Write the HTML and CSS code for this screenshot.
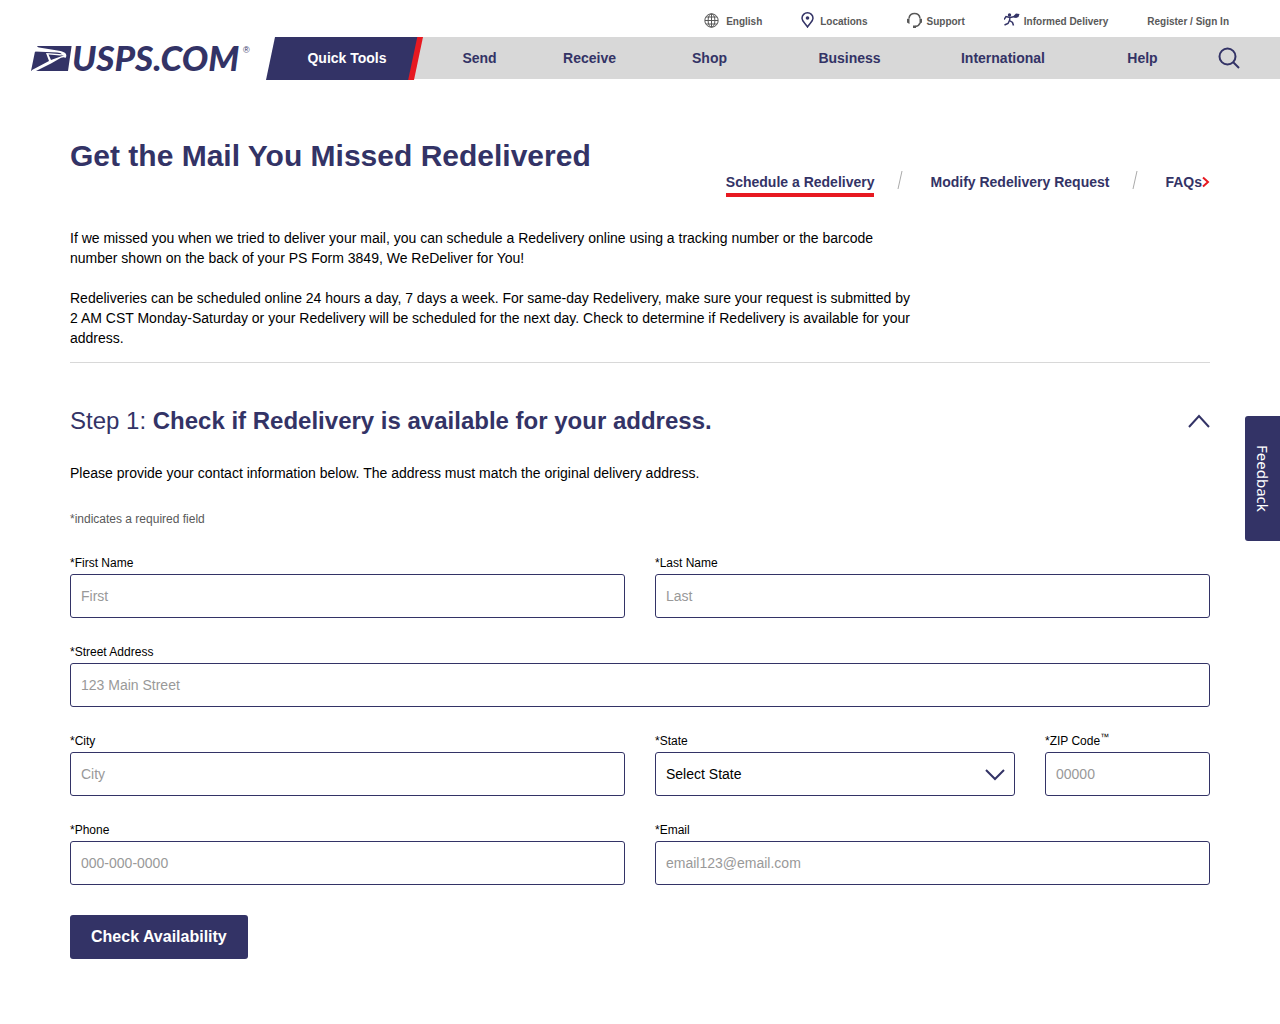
FILE: index.html
```html
<!DOCTYPE html>
<html lang="en">
<head>
<meta charset="utf-8">
<meta name="viewport" content="width=device-width, initial-scale=1">
<title>Schedule a Redelivery | USPS</title>
<link rel="stylesheet" href="styles.css">
</head>
<body>
<header class="site-header">
  <a class="logo" href="#" aria-label="USPS.COM home">
    <svg width="222" height="34" viewBox="0 0 222 34" aria-hidden="true">
      <path class="logo-mark" d="M6 5H40.600L37 30H0L4 10.500L9 9z"/>
      <path class="logo-wing" d="M5 6L28 9.800Q33 10.500 35 13Q36 15 34.500 17Q33 15.500 30 16.800L20 22.500L4 30.500H0L1 29L18 20L15 12L31 13.200Q30 11.800 26 11.500L4 10.500z"/>
      <path class="logo-mark" d="M17.500 13.500L29 14.500L33 14.200L29 15.800L20 19z"/>
      <text class="logo-text" x="41" y="30">USPS.COM</text>
      <text class="logo-reg" x="212" y="12">®</text>
    </svg>
  </a>
  <div class="header-bars">
    <nav class="utility" aria-label="Utility">
      <a href="#"><svg class="icon-globe" width="16" height="15" viewBox="0 0 16 15" aria-hidden="true"><circle cx="7.500" cy="7.500" r="6.700"/><ellipse cx="7.500" cy="7.500" rx="3.400" ry="6.700"/><path d="M7.500 1v13M1 7.500h13M2 4h11M2 11h11"/></svg>English</a>
      <a href="#"><svg class="icon-pin" width="13" height="16" viewBox="0 0 13 16" aria-hidden="true"><path d="M6.500 15C4.500 11.500 1 9.500 1 6.200A5.500 5.400 0 0 1 12 6.200C12 9.500 8.500 11.500 6.500 15z"/><circle cx="6.500" cy="6" r="1.800"/></svg>Locations</a>
      <a class="tight" href="#"><svg class="icon-headset" width="16" height="16" viewBox="0 0 16 16" aria-hidden="true"><path d="M2 6A5.600 5.500 0 0 1 13 6M13 11Q12 14 8.500 14.500"/><path class="solid" d="M0 7l2.500-1v6L0 10.500zM15 7l-2.500-1v6L15 10.500zM6 13.500h3V16H6z"/></svg>Support</a>
      <a class="tight" href="#"><svg class="icon-runner" width="16" height="16" viewBox="0 0 16 16" aria-hidden="true"><circle cx="5.500" cy="3" r="1.700"/><path class="limb" d="M0 7.500L2 4.500L6 5.500L11 4.500M6 5L5.500 9M5.500 8.500L8.500 10.500L9.500 13.500M5.500 8.500L4 11.500L0.500 13"/><path d="M9.500 4L12 1.500L15.500 2L14.500 5L12 6L10 5.500z"/></svg>Informed Delivery</a>
      <a href="#">Register / Sign In</a>
    </nav>
    <nav class="main-nav" aria-label="Main">
      <a class="quick-tools" href="#">Quick Tools</a>
      <a href="#">Send</a>
      <a href="#">Receive</a>
      <a href="#">Shop</a>
      <a href="#">Business</a>
      <a href="#">International</a>
      <a href="#">Help</a>
      <button class="search" type="button" aria-label="Search"><svg width="22" height="22" viewBox="0 0 22 22" aria-hidden="true"><circle cx="9.500" cy="9.500" r="8"/><path d="M15 15l6 6"/></svg></button>
    </nav>
  </div>
</header>

<main class="container">
  <div class="page-head">
    <h1>Get the Mail You Missed Redelivered</h1>
    <nav class="tabs" aria-label="Redelivery">
      <a class="active" href="#">Schedule a Redelivery</a>
      <svg width="10" height="18" viewBox="0 0 10 18" aria-hidden="true"><path d="M5 0L1 18"/></svg>
      <a href="#">Modify Redelivery Request</a>
      <svg width="10" height="18" viewBox="0 0 10 18" aria-hidden="true"><path d="M5 0L1 18"/></svg>
      <a class="faqs" href="#">FAQs<svg width="8" height="12" viewBox="0 0 8 12" aria-hidden="true"><path d="M1 1.500l5 4.500l-5 4.500"/></svg></a>
    </nav>
  </div>
  <div class="intro">
    <p>If we missed you when we tried to deliver your mail, you can schedule a Redelivery online using a tracking number or the barcode number shown on the back of your PS Form 3849, We ReDeliver for You!</p>
    <p>Redeliveries can be scheduled online 24 hours a day, 7 days a week. For same-day Redelivery, make sure your request is submitted by 2 AM CST Monday-Saturday or your Redelivery will be scheduled for the next day. Check to determine if Redelivery is available for your address.</p>
  </div>

  <section class="step">
    <div class="step-head">
      <h2>Step 1: <strong>Check if Redelivery is available for your address.</strong></h2>
      <button type="button" aria-label="Collapse step 1"><svg width="22" height="14" viewBox="0 0 22 14" aria-hidden="true"><path d="M1 13L11 2l10 11"/></svg></button>
    </div>
    <p>Please provide your contact information below. The address must match the original delivery address.</p>
    <p class="required-note">*indicates a required field</p>
    <form class="address-form">
      <div class="field"><label for="first">*First Name</label><input id="first" type="text" placeholder="First"></div>
      <div class="field"><label for="last">*Last Name</label><input id="last" type="text" placeholder="Last"></div>
      <div class="field full"><label for="street">*Street Address</label><input id="street" type="text" placeholder="123 Main Street"></div>
      <div class="field"><label for="city">*City</label><input id="city" type="text" placeholder="City"></div>
      <div class="state-zip">
        <div class="field"><label for="state">*State</label>
          <div class="select-wrap"><select id="state"><option>Select State</option></select><svg width="20" height="12" viewBox="0 0 20 12" aria-hidden="true"><path d="M1 1l9 9l9-9"/></svg></div>
        </div>
        <div class="field"><label for="zip">*ZIP Code<sup>™</sup></label><input id="zip" type="text" placeholder="00000"></div>
      </div>
      <div class="field"><label for="phone">*Phone</label><input id="phone" type="tel" placeholder="000-000-0000"></div>
      <div class="field"><label for="email">*Email</label><input id="email" type="email" placeholder="email123@email.com"></div>
      <button class="submit" type="button">Check Availability</button>
    </form>
  </section>
</main>
<button class="feedback" type="button">Feedback</button>
</body>
</html>
```
FILE: styles.css
```css
* {
  box-sizing: border-box;
}

body {
  margin: 0;
  background: #fff;
  color: #000;
  font: 14px/20px "Liberation Sans", Arial, sans-serif;
}

a {
  color: #333366;
  text-decoration: none;
}

h1, h2, p {
  margin: 0;
}

button {
  padding: 0;
  border: 0;
  background: none;
  font-family: inherit;
  cursor: pointer;
}

svg {
  display: block;
  flex: none;
  fill: none;
  stroke: #333366;
}

/* Header */
.site-header {
  display: flex;
}

.logo {
  flex: 0 0 266px;
  padding: 41px 0 0 31px;
}

.logo svg {
  overflow: visible;
  stroke: none;
}

.logo-mark, .logo-text, .logo-reg {
  fill: #333366;
}

.logo-wing {
  fill: #fff;
}

.logo-text {
  font: italic 900 35px Lato, sans-serif;
}

.logo-reg {
  font: 9px "Liberation Sans", Arial, sans-serif;
}

.header-bars {
  flex: 1;
}

.utility {
  display: flex;
  justify-content: flex-end;
  align-items: center;
  gap: 39px;
  height: 37px;
  padding: 6px 51px 0 0;
}

.utility a {
  display: flex;
  align-items: center;
  gap: 6px;
  color: #595959;
  font-size: 10px;
  font-weight: bold;
}

.utility .tight {
  gap: 4px;
}

.utility svg {
  margin-bottom: 3px;
}

.icon-globe, .icon-headset {
  stroke: #595959;
}

.icon-headset {
  stroke-width: 1.5;
}

.icon-headset .solid {
  fill: #595959;
  stroke: none;
}

.icon-pin {
  stroke-width: 1.5;
}

.icon-pin circle, .icon-runner {
  fill: #333366;
  stroke: none;
}

.icon-runner .limb {
  fill: none;
  stroke: #333366;
  stroke-width: 1.5;
}

.main-nav {
  display: grid;
  grid-template-columns: 158fr 111fr 109fr 131fr 149fr 158fr 121fr 52fr;
  height: 42px;
  padding-right: 25px;
  background: linear-gradient(90deg, #fff 12px, #d8d8d8 12px);
}

.main-nav > a, .search {
  display: flex;
  align-items: center;
  justify-content: center;
  padding-bottom: 1px;
  font-weight: bold;
}

.main-nav .quick-tools {
  height: 43px;
  padding: 0 0 2px 4px;
  background: linear-gradient(102deg, #333366 calc(100% - 16px), #e71921 calc(100% - 15px));
  clip-path: polygon(9px 0, calc(100% - 1px) 0, calc(100% - 10px) 100%, 0 100%);
  color: #fff;
}

.search svg {
  stroke-width: 2;
}

/* Page heading */
.container {
  max-width: 1170px;
  margin: 0 auto;
  padding: 56px 15px 64px;
}

.page-head {
  display: flex;
  justify-content: space-between;
  align-items: flex-start;
}

h1 {
  color: #333366;
  font-size: 30px;
  line-height: 42px;
}

.tabs {
  display: flex;
  gap: 23px;
  padding-top: 36px;
}

.tabs a {
  height: 26px;
  line-height: 22px;
  font-weight: bold;
}

.tabs .active {
  border-bottom: 4px solid #e71921;
}

.tabs svg {
  stroke: #aaa;
}

.tabs .faqs {
  display: flex;
  align-items: center;
  height: 22px;
}

.tabs .faqs svg {
  stroke: #e71921;
  stroke-width: 2;
}

.intro {
  display: grid;
  gap: 20px;
  max-width: 850px;
  margin-top: 31px;
}

/* Step */
.step {
  margin-top: 14px;
  border-top: 1px solid #d8d8d8;
  padding-top: 42px;
}

.step-head {
  display: flex;
  align-items: center;
  justify-content: space-between;
  margin-bottom: 26px;
}

h2 {
  color: #333366;
  font-size: 24px;
  font-weight: normal;
  line-height: 32px;
}

.step-head svg {
  stroke-width: 2;
}

.required-note {
  margin-top: 26px;
  color: #595959;
  font-size: 12px;
}

.address-form {
  display: grid;
  grid-template-columns: 1fr 1fr;
  gap: 25px 30px;
  margin-top: 25px;
}

.full {
  grid-column: 1 / -1;
}

.state-zip {
  display: grid;
  grid-template-columns: 24fr 11fr;
  gap: 30px;
}

.field label {
  display: block;
  height: 20px;
  font-size: 12px;
  line-height: 18px;
}

.field sup {
  font-size: 9px;
  line-height: 0;
}

.field input, .field select {
  display: block;
  width: 100%;
  height: 44px;
  border: 1px solid #333366;
  border-radius: 3px;
  padding: 0 10px;
  background: #fff;
  color: #000;
  font: inherit;
  appearance: none;
}

.field input::placeholder {
  color: #999;
}

.select-wrap {
  position: relative;
}

.select-wrap svg {
  position: absolute;
  top: 17px;
  right: 10px;
  stroke-width: 2;
  pointer-events: none;
}

.submit {
  justify-self: start;
  height: 44px;
  margin-top: 5px;
  padding: 0 21px;
  border-radius: 3px;
  background: #333366;
  color: #fff;
  font-size: 16px;
  font-weight: bold;
}

.feedback {
  position: fixed;
  top: 416px;
  right: 0;
  width: 35px;
  height: 125px;
  border-radius: 3px 0 0 3px;
  background: #333366;
  color: #fff;
  font: 15px "Noto Sans", sans-serif;
  writing-mode: vertical-rl;
}
```
